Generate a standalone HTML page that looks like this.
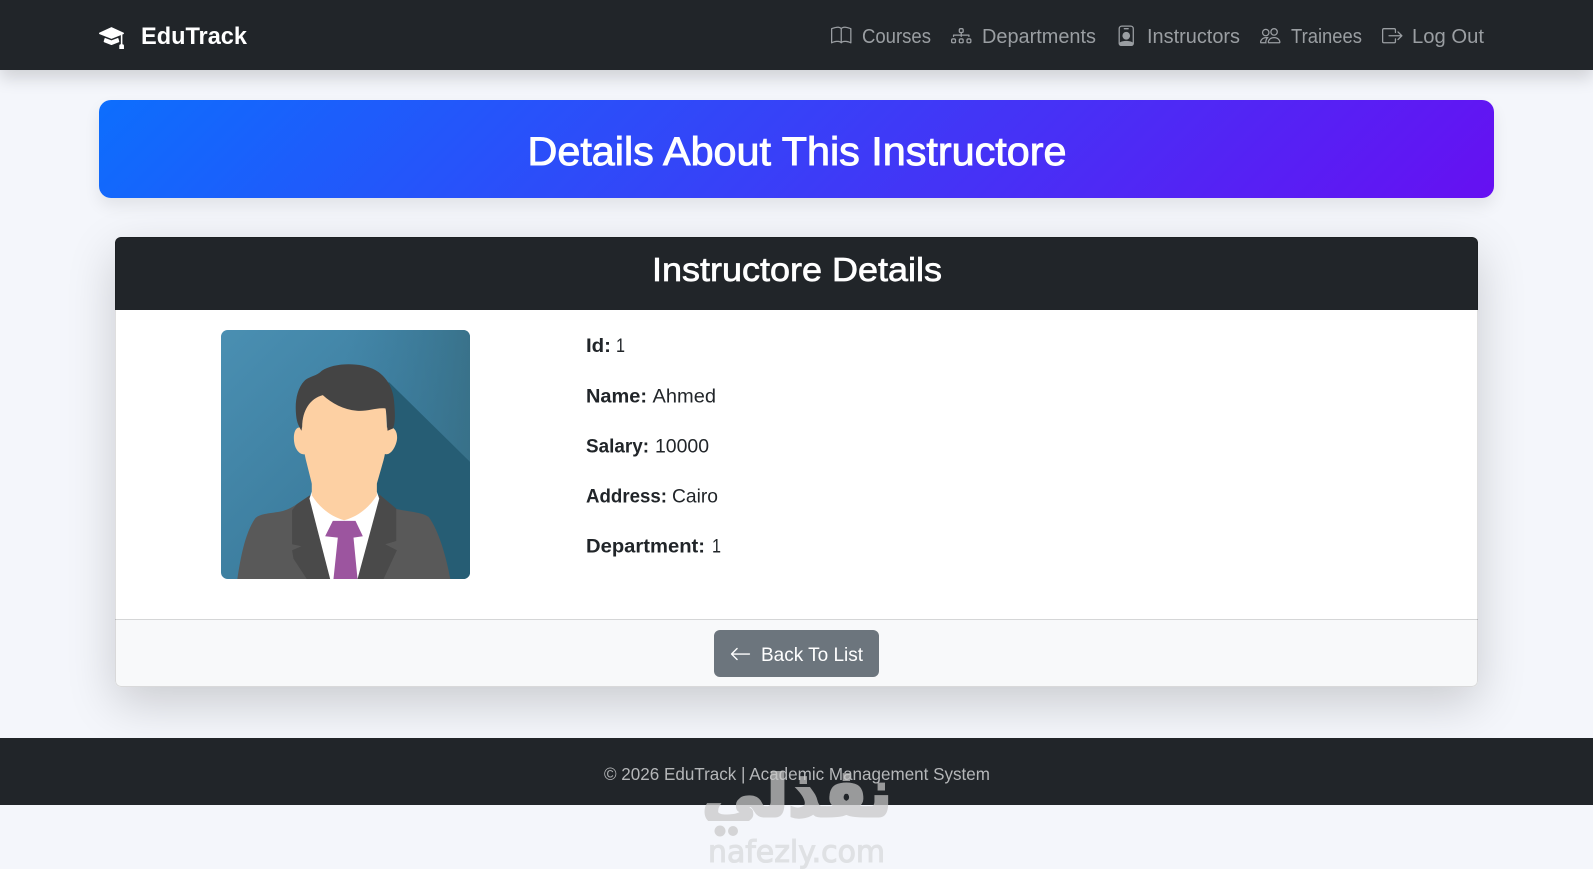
<!DOCTYPE html>
<html lang="en">
<head>
<meta charset="utf-8">
<title>EduTrack</title>
<style>
html,body{margin:0;padding:0;width:1593px;height:869px;overflow:hidden;background:#f4f6fb;font-family:"Liberation Sans","DejaVu Sans",sans-serif}
.b{position:absolute;box-sizing:border-box}
#nav{left:0;top:0;width:1593px;height:70px;background:#212529;box-shadow:0 8px 16px rgba(0,0,0,.15)}
#hero{left:99px;top:100px;width:1395px;height:98px;border-radius:12px;background:linear-gradient(135deg,#0d6efd,#6610f2);box-shadow:0 8px 16px rgba(0,0,0,.08)}
#card{left:115px;top:237px;width:1363px;height:450px;border-radius:6px;background:#fff;box-shadow:0 16px 48px rgba(0,0,0,.175);overflow:hidden}
#chead{left:0;top:0;width:1363px;height:73px;background:#212529}
#cfoot{left:0;top:382px;width:1363px;height:68px;background:#f8f9fa;border-top:1px solid #d5d6d7}
#cline{left:0;top:0;width:1363px;height:450px;border-radius:6px;border:1px solid rgba(0,0,0,.125)}
#btn{left:714px;top:630px;width:165px;height:47px;border-radius:6px;background:#6c757d}
#foot{left:0;top:738px;width:1593px;height:67px;background:#212529}
svg{position:absolute;left:0;top:0}
</style>
</head>
<body>
<div class="b" id="nav"></div>
<div class="b" id="hero"></div>
<div class="b" id="card"><div class="b" id="chead"></div><div class="b" id="cfoot"></div><div class="b" id="cline"></div></div>
<div class="b" id="btn"></div>
<div class="b" id="foot"></div>

<svg width="249" height="249" viewBox="63 30 746 746" style="left:221px;top:330px">
<defs>
<linearGradient id="bg" x1="0" y1="0" x2="1" y2="1"><stop offset="0" stop-color="#4a8fb2"/><stop offset=".55" stop-color="#3d7e9f"/><stop offset="1" stop-color="#33708f"/></linearGradient>
<linearGradient id="bg2" x1="0" y1="0" x2="1" y2="0"><stop offset=".5" stop-color="#3b7a9a" stop-opacity="0"/><stop offset="1" stop-color="#386f85" stop-opacity=".8"/></linearGradient>
<clipPath id="r"><rect x="63" y="30" width="746" height="746" rx="20"/></clipPath>
</defs>
<g clip-path="url(#r)">
<rect x="63" y="30" width="746" height="746" fill="url(#bg)"/>
<rect x="63" y="30" width="746" height="746" fill="url(#bg2)"/>
<path d="M565 185L809 425V776H690L530 530L500 400L560 330Z" fill="#265d74"/>
<path d="M112 776C122 710 135 640 165 595C178 580 205 580 240 574C262 570 280 560 300 545L330 525H540L585 565C625 575 665 575 685 590C715 630 738 710 750 776Z" fill="#595959"/>
<path d="M330 525L290 552L276 570L276 672L304 678L276 690L280 715L320 776H550L590 690L555 672L588 662L588 565L540 525Z" fill="#4a4a4a"/>
<path d="M328 535L390 776H472L537 535L530 515H335Z" fill="#fff"/>
<path d="M335 470H530V525C505 565 470 590 432 600C395 590 360 565 335 525Z" fill="#fdd0a3"/>
<path d="M398 602H466L488 648L460 652L472 776H400L413 652L375 648Z" fill="#9c559f"/>
<path d="M296 322C282 325 278 350 284 375C290 395 303 405 316 402H556C570 405 585 385 590 360C593 340 585 322 572 322Z" fill="#fdd0a3"/>
<path d="M306 320C306 270 325 235 368 222L556 240L560 320C560 360 556 400 550 420L530 490H335L320 430C312 400 306 360 306 320Z" fill="#fdd0a3"/>
<path d="M304 332C298 320 290 310 288 285C284 245 290 205 315 180C330 168 350 168 365 152C400 128 480 125 525 150C560 170 580 205 582 250C585 285 585 310 578 325L562 332C560 310 560 285 556 265C530 262 500 275 470 272C430 268 395 250 368 225C330 235 307 270 306 320Z" fill="#444"/>
</g>
</svg>

<svg width="1593" height="869" viewBox="0 0 1593 869">
<defs><clipPath id="wm"><rect x="690" y="771" width="210" height="50"/></clipPath></defs>
<!-- brand -->
<g fill="#fff" transform="translate(99,24) scale(1.56)">
<path d="M8.211 2.047a.5.5 0 0 0-.422 0l-7.5 3.5a.5.5 0 0 0 .025.917l7.5 3a.5.5 0 0 0 .372 0L14 7.14V13a1 1 0 0 0-1 1v2h3v-2a1 1 0 0 0-1-1V6.739l.686-.275a.5.5 0 0 0 .025-.917l-7.5-3.5Z"/>
<path d="M4.176 9.032a.5.5 0 0 0-.656.327l-.5 1.7a.5.5 0 0 0 .294.605l4.5 1.8a.5.5 0 0 0 .372 0l4.5-1.8a.5.5 0 0 0 .294-.605l-.5-1.7a.5.5 0 0 0-.656-.327L8 10.466 4.176 9.032Z"/>
</g>
<text x="141" y="44" font-size="24" font-weight="700" fill="#fff" textLength="106" lengthAdjust="spacingAndGlyphs">EduTrack</text>

<!-- nav -->
<g fill="#9a9ea2">
<g transform="translate(831,25.5) scale(1.28)"><path d="M1 2.828c.885-.37 2.154-.769 3.388-.893 1.33-.134 2.458.063 3.112.752v9.746c-.935-.53-2.12-.603-3.213-.493-1.18.12-2.37.461-3.287.811V2.828zm7.5-.141c.654-.689 1.782-.886 3.112-.752 1.234.124 2.503.523 3.388.893v9.923c-.918-.35-2.107-.692-3.287-.81-1.094-.111-2.278-.039-3.213.492V2.687zM8 1.783C7.015.936 5.587.81 4.287.94c-1.514.153-3.042.672-3.994 1.105A.5.5 0 0 0 0 2.5v11a.5.5 0 0 0 .707.455c.882-.4 2.303-.881 3.68-1.02 1.409-.142 2.59.087 3.223.877a.5.5 0 0 0 .78 0c.633-.79 1.814-1.019 3.222-.877 1.378.139 2.8.62 3.681 1.02A.5.5 0 0 0 16 13.5v-11a.5.5 0 0 0-.293-.455c-.952-.433-2.48-.952-3.994-1.105C10.413.809 8.985.936 8 1.783z"/></g>
<g transform="translate(951,25.5) scale(1.28)"><path d="M6 3.5A1.5 1.5 0 0 1 7.5 2h1A1.5 1.5 0 0 1 10 3.5v1A1.5 1.5 0 0 1 8.5 6v1H14a.5.5 0 0 1 .5.5v1a.5.5 0 0 1-1 0V8h-5v.5a.5.5 0 0 1-1 0V8h-5v.5a.5.5 0 0 1-1 0v-1A.5.5 0 0 1 2 7h5.5V6A1.5 1.5 0 0 1 6 4.5v-1zM8.5 5a.5.5 0 0 0 .5-.5v-1a.5.5 0 0 0-.5-.5h-1a.5.5 0 0 0-.5.5v1a.5.5 0 0 0 .5.5h1zM0 11.5A1.5 1.5 0 0 1 1.5 10h1A1.5 1.5 0 0 1 4 11.5v1A1.5 1.5 0 0 1 2.5 14h-1A1.5 1.5 0 0 1 0 12.5v-1zm1.5-.5a.5.5 0 0 0-.5.5v1a.5.5 0 0 0 .5.5h1a.5.5 0 0 0 .5-.5v-1a.5.5 0 0 0-.5-.5h-1zm4.5.5A1.5 1.5 0 0 1 7.5 10h1a1.5 1.5 0 0 1 1.5 1.5v1A1.5 1.5 0 0 1 8.5 14h-1A1.5 1.5 0 0 1 6 12.5v-1zm1.5-.5a.5.5 0 0 0-.5.5v1a.5.5 0 0 0 .5.5h1a.5.5 0 0 0 .5-.5v-1a.5.5 0 0 0-.5-.5h-1zm4.5.5a1.5 1.5 0 0 1 1.5-1.5h1a1.5 1.5 0 0 1 1.5 1.5v1a1.5 1.5 0 0 1-1.5 1.5h-1a1.5 1.5 0 0 1-1.5-1.5v-1zm1.5-.5a.5.5 0 0 0-.5.5v1a.5.5 0 0 0 .5.5h1a.5.5 0 0 0 .5-.5v-1a.5.5 0 0 0-.5-.5h-1z"/></g>
<g transform="translate(1116,25.5) scale(1.28)"><path d="M6.5 2a.5.5 0 0 0 0 1h3a.5.5 0 0 0 0-1h-3zM11 8a3 3 0 1 1-6 0 3 3 0 0 1 6 0z"/><path d="M4.5 0A2.5 2.5 0 0 0 2 2.5V14a2 2 0 0 0 2 2h8a2 2 0 0 0 2-2V2.5A2.5 2.5 0 0 0 11.5 0h-7zM3 2.5A1.5 1.5 0 0 1 4.5 1h7A1.5 1.5 0 0 1 13 2.5v10.795a4.2 4.2 0 0 0-.776-.492C11.392 12.387 10.063 12 8 12s-3.392.387-4.224.803a4.2 4.2 0 0 0-.776.492V2.5z"/></g>
<g transform="translate(1260,25.5) scale(1.28)"><path d="M15 14s1 0 1-1-1-4-5-4-5 3-5 4 1 1 1 1h8Zm-7.978-1A.261.261 0 0 1 7 12.996c.001-.264.167-1.03.76-1.72C8.312 10.629 9.282 10 11 10c1.717 0 2.687.63 3.24 1.276.593.69.758 1.457.76 1.72l-.008.002a.274.274 0 0 1-.014.002H7.022ZM11 7a2 2 0 1 0 0-4 2 2 0 0 0 0 4Zm3-2a3 3 0 1 1-6 0 3 3 0 0 1 6 0ZM6.936 9.28a5.88 5.88 0 0 0-1.23-.247A7.35 7.35 0 0 0 5 9c-4 0-5 3-5 4 0 .667.333 1 1 1h4.216A2.238 2.238 0 0 1 5 13c0-1.01.377-2.042 1.09-2.904.243-.294.526-.569.846-.816ZM4.92 10A5.493 5.493 0 0 0 4 13H1c0-.26.164-1.03.76-1.724.545-.636 1.492-1.256 3.16-1.275ZM1.5 5.5a3 3 0 1 1 6 0 3 3 0 0 1-6 0Zm3-2a2 2 0 1 0 0 4 2 2 0 0 0 0-4Z"/></g>
<g transform="translate(1382,25.5) scale(1.28)"><path d="M10 12.5a.5.5 0 0 1-.5.5h-8a.5.5 0 0 1-.5-.5v-9a.5.5 0 0 1 .5-.5h8a.5.5 0 0 1 .5.5v2a.5.5 0 0 0 1 0v-2A1.5 1.5 0 0 0 9.5 2h-8A1.5 1.5 0 0 0 0 3.5v9A1.5 1.5 0 0 0 1.5 14h8a1.5 1.5 0 0 0 1.5-1.5v-2a.5.5 0 0 0-1 0v2z"/><path d="M15.854 8.354a.5.5 0 0 0 0-.708l-3-3a.5.5 0 0 0-.708.708L14.293 7.5H5.5a.5.5 0 0 0 0 1h8.793l-2.147 2.146a.5.5 0 0 0 .708.708l3-3z"/></g>
<g font-size="20">
<text x="862" y="43" textLength="69" lengthAdjust="spacingAndGlyphs">Courses</text>
<text x="982" y="43" textLength="114" lengthAdjust="spacingAndGlyphs">Departments</text>
<text x="1147" y="43" textLength="93" lengthAdjust="spacingAndGlyphs">Instructors</text>
<text x="1291" y="43" textLength="71" lengthAdjust="spacingAndGlyphs">Trainees</text>
<text x="1412" y="43" textLength="72" lengthAdjust="spacingAndGlyphs">Log Out</text>
</g>
</g>

<!-- headings -->
<text x="527.5" y="165" font-size="40" fill="#fff" stroke="#fff" stroke-width=".9" textLength="539" lengthAdjust="spacingAndGlyphs">Details About This Instructore</text>
<text x="652" y="281" font-size="33" fill="#fff" stroke="#fff" stroke-width=".7" textLength="290" lengthAdjust="spacingAndGlyphs">Instructore Details</text>

<!-- details -->
<g font-size="19.5" fill="#212529">
<text x="586" y="352" font-weight="700" textLength="25" lengthAdjust="spacingAndGlyphs">Id:</text><text x="616" y="352" textLength="9" lengthAdjust="spacingAndGlyphs">1</text>
<text x="586" y="402.5" font-weight="700" textLength="61" lengthAdjust="spacingAndGlyphs">Name:</text><text x="652.5" y="402.5" textLength="63.5" lengthAdjust="spacingAndGlyphs">Ahmed</text>
<text x="586" y="452.5" font-weight="700" textLength="63" lengthAdjust="spacingAndGlyphs">Salary:</text><text x="655" y="452.5" textLength="54" lengthAdjust="spacingAndGlyphs">10000</text>
<text x="586" y="502.5" font-weight="700" textLength="81" lengthAdjust="spacingAndGlyphs">Address:</text><text x="672" y="502.5" textLength="46" lengthAdjust="spacingAndGlyphs">Cairo</text>
<text x="586" y="552.5" font-weight="700" textLength="119" lengthAdjust="spacingAndGlyphs">Department:</text><text x="712" y="552.5" textLength="9" lengthAdjust="spacingAndGlyphs">1</text>
</g>

<!-- button -->
<g fill="#fff" transform="translate(729.5,643) scale(1.375)"><path d="M15 8a.5.5 0 0 0-.5-.5H2.707l3.147-3.146a.5.5 0 1 0-.708-.708l-4 4a.5.5 0 0 0 0 .708l4 4a.5.5 0 0 0 .708-.708L2.707 8.5H14.5A.5.5 0 0 0 15 8z"/></g>
<text x="761" y="661" font-size="19.5" fill="#fff" textLength="102" lengthAdjust="spacingAndGlyphs">Back To List</text>

<!-- footer -->
<text x="604" y="780" font-size="17.5" fill="#b5b7b9" textLength="386" lengthAdjust="spacingAndGlyphs">© 2026 EduTrack | Academic Management System</text>

<!-- watermark -->
<g fill="#c8c8c8" opacity=".72">
<g clip-path="url(#wm)">
<text x="892" y="816" font-family="'DejaVu Sans',sans-serif" font-size="66" font-weight="700" direction="rtl" stroke="#c8c8c8" stroke-width="3" textLength="190" lengthAdjust="spacingAndGlyphs">نفذلي</text>
</g>
<circle cx="720" cy="831" r="5.5"/><circle cx="733" cy="831" r="5"/>
<text x="708" y="862" font-family="'DejaVu Sans',sans-serif" font-size="30" fill="#d8d9dc" stroke="#d8d9dc" stroke-width="1.1" textLength="177" lengthAdjust="spacingAndGlyphs">nafezly.com</text>
</g>
</svg>
</body>
</html>
